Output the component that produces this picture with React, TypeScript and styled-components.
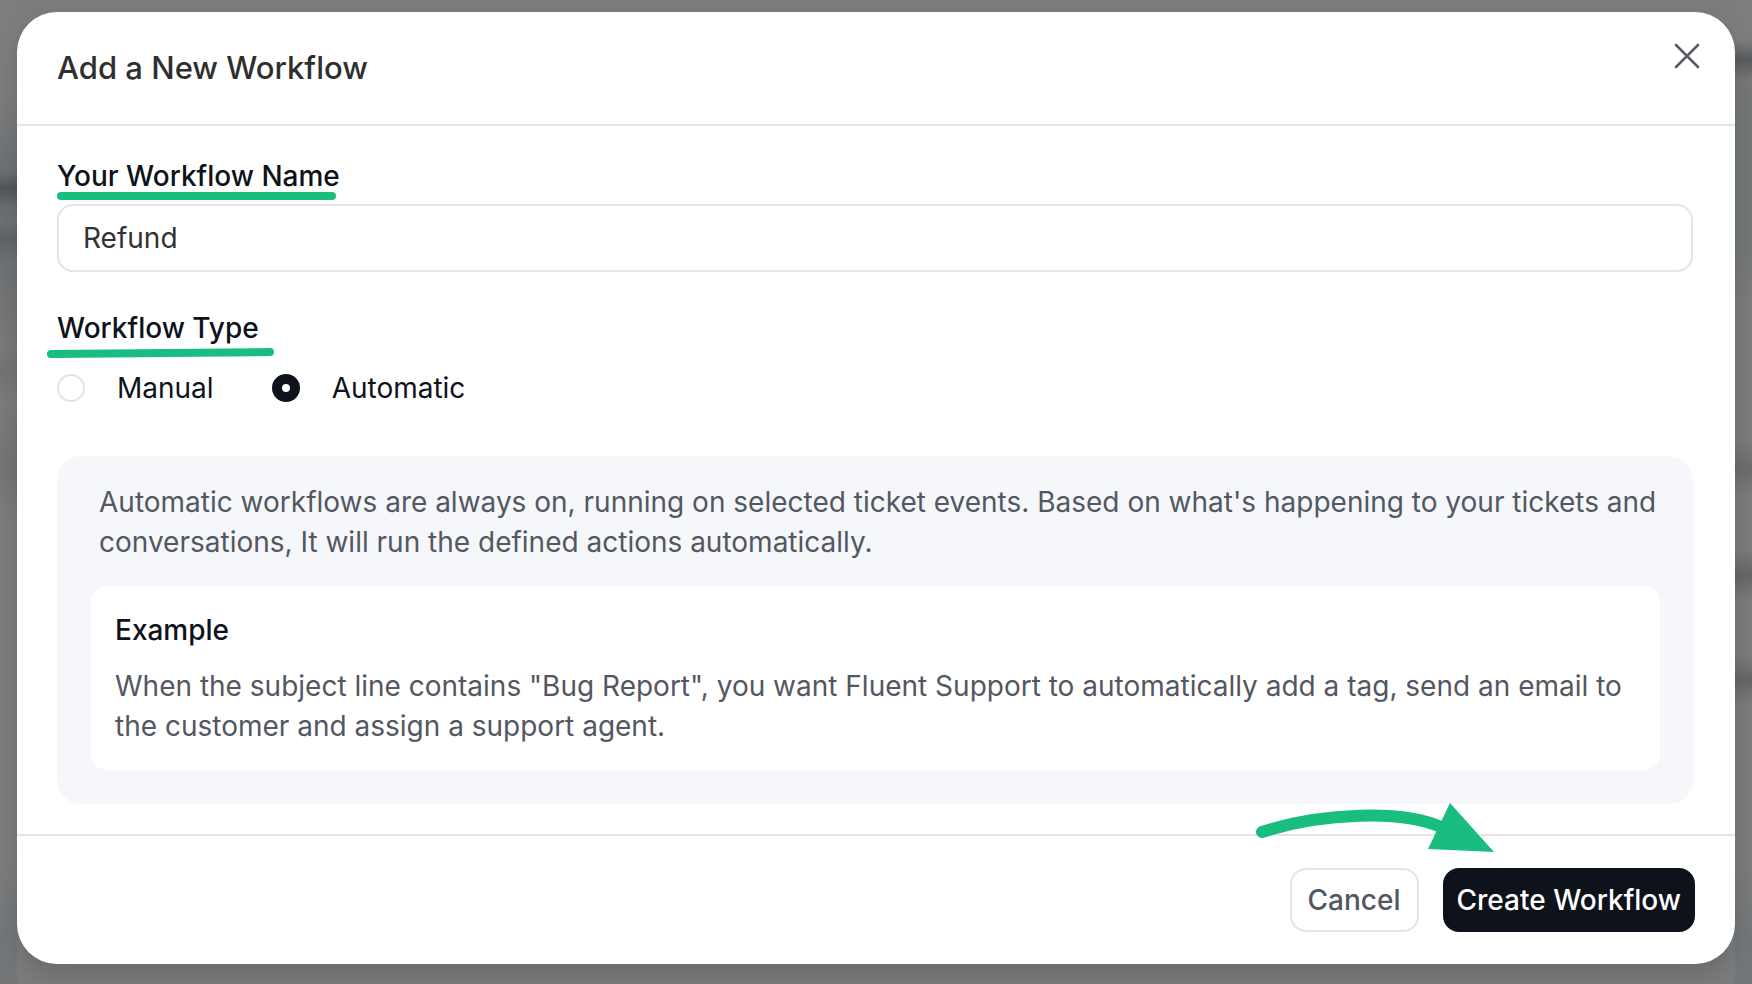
import React, { useState } from "react";
import styled, { createGlobalStyle } from "styled-components";

const GlobalStyle = createGlobalStyle`
  * { box-sizing: border-box; }
  body { margin: 0; background: #7b7b7b; font-family: Inter, "Liberation Sans", sans-serif; }
  h1, h2, p, fieldset, legend { margin: 0; padding: 0; border: 0; }
`;

const green = "#19bd80";
const line = "#e4e4e5";
const ink = "#0e121b";

const Backdrop = styled.div`
  min-height: 100vh;
  padding: 12px 17px 20px;
  background:
    linear-gradient(to bottom, #7d7d7d 90px, #74777a 140px, #6d7073 172px, #525456 188px, #6a6d6f 206px, #6f7275 222px, #616466 238px, #6f7274 262px, #737577 300px, #7a7a7a 350px, #747474 370px, #7c7c7c 400px, #757575 470px, #7d7d7d 520px, #7d7d7d 860px, #74787b 920px, #747678) left / 17px 100% no-repeat,
    linear-gradient(to bottom, #7d7d7d 40px, #585c5e 60px, #777777 80px, #737877 120px, #737877 250px, #7c7c7c 310px, #7c7c7c 440px, #6c6c6c 470px, #7c7c7c 495px, #7c7c7c 550px, #666666 575px, #7c7c7c 600px, #7c7c7c 655px, #666666 680px, #7c7c7c 705px, #7c7c7c 860px, #73777a 940px) right / 17px 100% no-repeat,
    #7c7c7c;
`;

const Dialog = styled.main`
  border-radius: 40px;
  background: #ffffff;
  box-shadow: 0 12px 24px rgba(0, 0, 0, 0.14);
`;

const Header = styled.header`
  display: flex;
  align-items: flex-start;
  justify-content: space-between;
  padding: 28px 32px 28px 40px;
  border-bottom: 2px solid ${line};
`;

const Title = styled.h1`
  color: #2f2f2f;
  font-size: 31px;
  font-weight: 500;
  line-height: 56px;
`;

const CloseButton = styled.button`
  display: flex;
  padding: 0;
  border: 0;
  background: none;
  color: #5a5d63;
  cursor: pointer;
`;

const Body = styled.form`
  padding: 30px 42px 30px 40px;
`;

const Field = styled.div`
  display: flex;
  flex-direction: column;
  align-items: flex-start;
  gap: 8px;
  margin-bottom: 36px;
`;

const Marked = styled.span`
  position: relative;
  display: inline-block;
  color: ${ink};
  font-size: 28px;
  font-weight: 500;
  line-height: 40px;
`;

const Underline = styled.svg<{ $left: number; $top: number }>`
  position: absolute;
  left: ${(p) => p.$left}px;
  top: ${(p) => p.$top}px;
  pointer-events: none;
`;

const TextInput = styled.input`
  width: 100%;
  height: 68px;
  padding: 0 24px;
  border: 2px solid ${line};
  border-radius: 16px;
  background: #ffffff;
  color: #303236;
  font: 400 28px/40px Inter, "Liberation Sans", sans-serif;
  outline: none;
`;

const Options = styled.div`
  display: flex;
  gap: 58px;
  margin: 20px 0 48px;
`;

const Option = styled.label`
  display: flex;
  align-items: center;
  gap: 32px;
  color: ${ink};
  font-size: 28px;
  line-height: 40px;
`;

const Radio = styled.input`
  appearance: none;
  width: 28px;
  height: 28px;
  margin: 0;
  border: 2px solid ${line};
  border-radius: 50%;
  background: #ffffff;

  &:checked {
    border: 10px solid ${ink};
  }
`;

const Info = styled.section`
  padding: 26px 33px 34px 34px;
  border-radius: 24px;
  background: #f5f7fa;
`;

const Text = styled.p`
  color: #535762;
  font-size: 28px;
  line-height: 40px;
`;

const Intro = styled(Text)`
  padding-left: 8px;
`;

const Example = styled.div`
  margin-top: 24px;
  padding: 24px;
  border-radius: 16px;
  background: #ffffff;
`;

const ExampleTitle = styled.h2`
  margin-bottom: 16px;
  color: ${ink};
  font-size: 28px;
  font-weight: 500;
  line-height: 40px;
`;

const Footer = styled.footer`
  position: relative;
  display: flex;
  justify-content: flex-end;
  gap: 24px;
  padding: 32px 40px;
  border-top: 2px solid ${line};
`;

const Button = styled.button<{ $primary?: boolean }>`
  height: 64px;
  padding: 0 ${(p) => (p.$primary ? 12 : 16)}px;
  border: 2px solid ${(p) => (p.$primary ? ink : line)};
  border-radius: 16px;
  background: ${(p) => (p.$primary ? ink : "#ffffff")};
  color: ${(p) => (p.$primary ? "#ffffff" : "#535762")};
  font: 500 28px/40px Inter, "Liberation Sans", sans-serif;
  cursor: pointer;
`;

const Arrow = styled.svg`
  position: absolute;
  right: 240px;
  top: -33px;
  pointer-events: none;
`;

export default function App() {
  const [name, setName] = useState("Refund");
  const [type, setType] = useState("automatic");
  return (
    <>
      <GlobalStyle />
      <Backdrop>
        <Dialog role="dialog" aria-labelledby="dialog-title">
          <Header>
            <Title id="dialog-title">Add a New Workflow</Title>
            <CloseButton type="button" aria-label="Close">
              <svg width="32" height="32" viewBox="0 0 32 32" fill="none" stroke="currentColor" strokeWidth="2.6" strokeLinecap="round">
                <path d="M5 5L27 27M27 5L5 27" />
              </svg>
            </CloseButton>
          </Header>
          <Body id="workflow-form" onSubmit={(e) => e.preventDefault()}>
            <Field>
              <label htmlFor="workflow-name">
                <Marked>
                  Your Workflow Name
                  <Underline $left={0} $top={36} width="280" height="8" aria-hidden="true">
                    <path d="M4 4H275" stroke={green} strokeWidth="8" strokeLinecap="round" />
                  </Underline>
                </Marked>
              </label>
              <TextInput id="workflow-name" value={name} onChange={(e) => setName(e.target.value)} />
            </Field>
            <fieldset>
              <legend>
                <Marked>
                  Workflow Type
                  <Underline $left={-10} $top={40} width="228" height="10" aria-hidden="true">
                    <path d="M4 6L223 4" stroke={green} strokeWidth="8" strokeLinecap="round" />
                  </Underline>
                </Marked>
              </legend>
              <Options>
                <Option>
                  <Radio type="radio" name="type" checked={type === "manual"} onChange={() => setType("manual")} />
                  Manual
                </Option>
                <Option>
                  <Radio type="radio" name="type" checked={type === "automatic"} onChange={() => setType("automatic")} />
                  Automatic
                </Option>
              </Options>
            </fieldset>
            <Info>
              <Intro>
                Automatic workflows are always on, running on selected ticket events. Based on what's happening to your
                tickets and conversations, It will run the defined actions automatically.
              </Intro>
              <Example>
                <ExampleTitle>Example</ExampleTitle>
                <Text>
                  When the subject line contains "Bug Report", you want Fluent Support to automatically add a tag, send
                  an email to the customer and assign a support agent.
                </Text>
              </Example>
            </Info>
          </Body>
          <Footer>
            <Arrow width="240" height="52" viewBox="0 0 240 52" aria-hidden="true">
              <path d="M7 29C65 10 148 6 188 25" fill="none" stroke={green} strokeWidth="12" strokeLinecap="round" />
              <path d="M195 0L239 49L173 46Z" fill={green} />
            </Arrow>
            <Button type="button">Cancel</Button>
            <Button type="submit" form="workflow-form" $primary>
              Create Workflow
            </Button>
          </Footer>
        </Dialog>
      </Backdrop>
    </>
  );
}
